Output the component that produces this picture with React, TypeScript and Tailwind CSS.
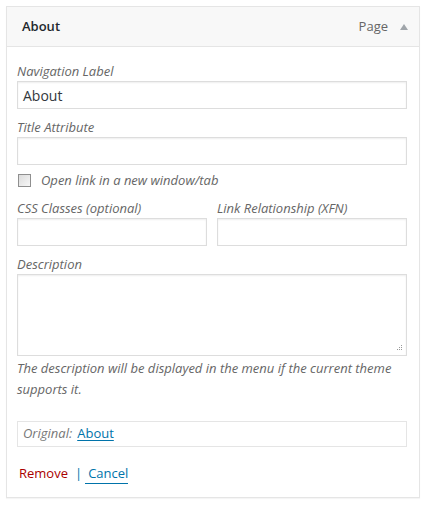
const font = { fontFamily: '"Open Sans", "Liberation Sans", sans-serif' };

function FieldLabel({ children }: { children: React.ReactNode }) {
  return <div className="text-[13px] italic leading-[19px] text-[#666]">{children}</div>;
}

function TextInput({ value }: { value?: string }) {
  return (
    <div className="box-border flex h-[28px] w-full items-center border border-[#ddd] bg-white px-[5px] text-[14px] text-[#32373c] shadow-[inset_0_1px_2px_rgba(0,0,0,0.07)]">
      {value}
    </div>
  );
}

export default function App() {
  return (
    <div className="min-h-[506px] bg-white pl-[6px] pt-[6px]" style={font}>
      <div className="box-border w-[414px] border border-[#e5e5e5] bg-white shadow-[0_1px_1px_rgba(0,0,0,0.04)]">
        <div className="flex h-[40px] items-center border-b border-[#e5e5e5] bg-[#f8f8f8] pl-[15px] pr-[10px]">
          <span className="text-[13px] font-semibold text-[#23282d]">About</span>
          <span className="ml-auto text-[13px] text-[#666]">Page</span>
          <svg className="ml-[12px] mr-[1px]" width="8" height="6" viewBox="0 0 8 6">
            <path d="M4 0 L8 6 L0 6 Z" fill="#a0a5aa" />
          </svg>
        </div>

        <div className="flex flex-col pb-[13px] pl-[10px] pr-[12px] pt-[15px]">
          <FieldLabel>Navigation Label</FieldLabel>
          <TextInput value="About" />

          <div className="mt-[9px]">
            <FieldLabel>Title Attribute</FieldLabel>
            <TextInput />
          </div>

          <div className="mt-[6px] flex h-[19px] items-center">
            <span className="ml-[1px] box-border h-[13px] w-[13px] border border-[#8f8f8f] bg-gradient-to-br from-[#dcdcdc] to-[#f7f7f7]" />
            <span className="ml-[10px] text-[13px] italic text-[#666]">Open link in a new window/tab</span>
          </div>

          <div className="mt-[9px] grid grid-cols-2 gap-[10px]">
            <div>
              <FieldLabel>CSS Classes (optional)</FieldLabel>
              <TextInput />
            </div>
            <div>
              <FieldLabel>Link Relationship (XFN)</FieldLabel>
              <TextInput />
            </div>
          </div>

          <div className="mt-[9px]">
            <FieldLabel>Description</FieldLabel>
            <div className="relative box-border h-[82px] w-full border border-[#ddd] bg-white shadow-[inset_0_1px_2px_rgba(0,0,0,0.07)]">
              <svg className="absolute bottom-[3px] right-[3px]" width="8" height="8" viewBox="0 0 8 8">
                <g fill="#999">
                  <rect x="6" y="1" width="1" height="1" />
                  <rect x="4" y="3" width="1" height="1" />
                  <rect x="6" y="3" width="1" height="1" />
                  <rect x="2" y="5" width="1" height="1" />
                  <rect x="4" y="5" width="1" height="1" />
                  <rect x="6" y="5" width="1" height="1" />
                </g>
              </svg>
            </div>
          </div>

          <p className="mt-[2px] text-[13px] italic leading-[21px] text-[#666]">
            The description will be displayed in the menu if the current theme supports it.
          </p>

          <div className="mt-[21px] box-border flex h-[26px] items-center border border-[#e5e5e5] px-[5px] text-[13px]">
            <span className="italic text-[#777]">Original:</span>
            <span className="ml-[5px] text-[#0073aa] underline underline-offset-2">About</span>
          </div>

          <div className="mt-[17px] flex h-[20px] items-center pl-[2px] text-[13px]">
            <span className="text-[#a00]">Remove</span>
            <span className="ml-[7px] mr-[3px] text-[#0073aa]">|</span>
            <span className="border-b border-[#0073aa] pl-[3px] text-[#0073aa]">Cancel</span>
          </div>
        </div>
      </div>
    </div>
  );
}
